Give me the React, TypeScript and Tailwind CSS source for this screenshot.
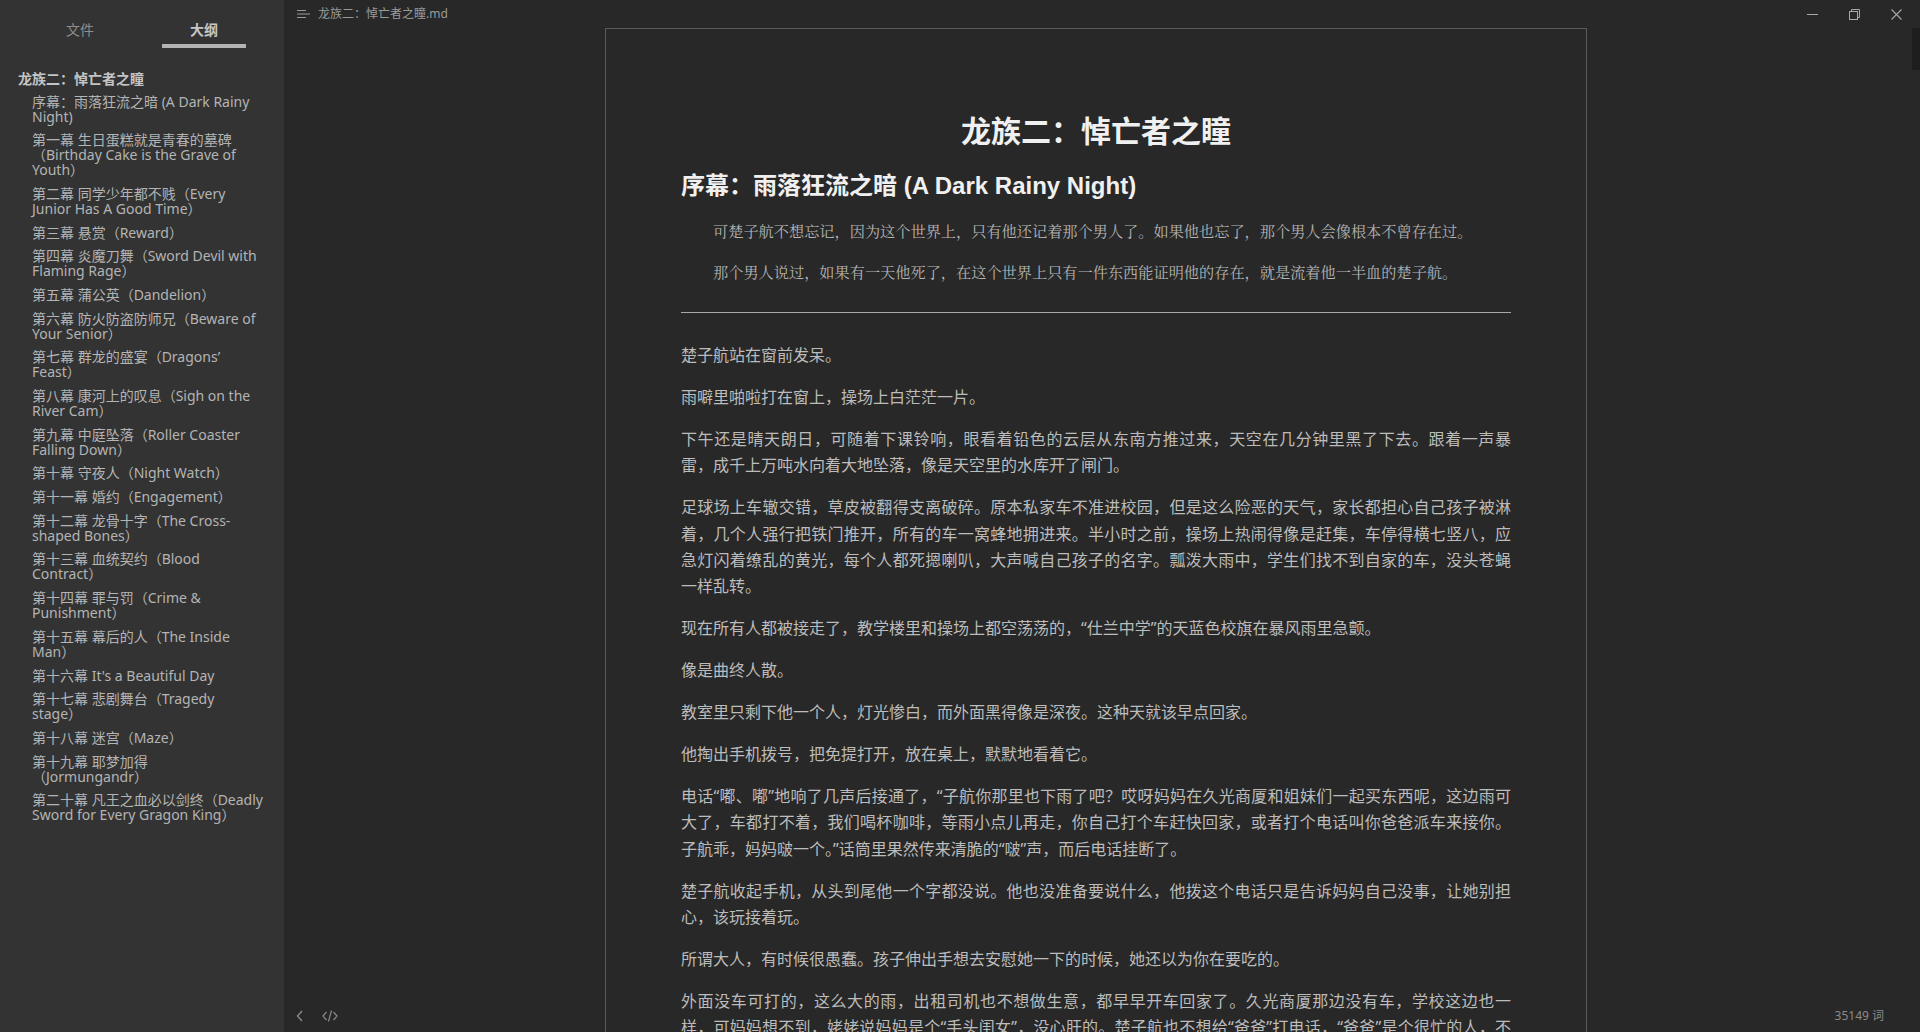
import React from 'react';

const OUTLINE = [
  '序幕：雨落狂流之暗 (A Dark Rainy Night)',
  '第一幕 生日蛋糕就是青春的墓碑（Birthday Cake is the Grave of Youth）',
  '第二幕 同学少年都不贱（Every Junior Has A Good Time）',
  '第三幕 悬赏（Reward）',
  '第四幕 炎魔刀舞（Sword Devil with Flaming Rage）',
  '第五幕 蒲公英（Dandelion）',
  '第六幕 防火防盗防师兄（Beware of Your Senior）',
  '第七幕 群龙的盛宴（Dragons’ Feast）',
  '第八幕 康河上的叹息（Sigh on the River Cam）',
  '第九幕 中庭坠落（Roller Coaster Falling Down）',
  '第十幕 守夜人（Night Watch）',
  '第十一幕 婚约（Engagement）',
  '第十二幕 龙骨十字（The Cross-shaped Bones）',
  '第十三幕 血统契约（Blood Contract）',
  '第十四幕 罪与罚（Crime & Punishment）',
  '第十五幕 幕后的人（The Inside Man）',
  '第十六幕 It\'s a Beautiful Day',
  '第十七幕 悲剧舞台（Tragedy stage）',
  '第十八幕 迷宫（Maze）',
  '第十九幕 耶梦加得（Jormungandr）',
  '第二十幕 凡王之血必以剑终（Deadly Sword for Every Gragon King）',
];

const QUOTE = [
  '可楚子航不想忘记，因为这个世界上，只有他还记着那个男人了。如果他也忘了，那个男人会像根本不曾存在过。',
  '那个男人说过，如果有一天他死了，在这个世界上只有一件东西能证明他的存在，就是流着他一半血的楚子航。',
];

const BODY = [
  '楚子航站在窗前发呆。',
  '雨噼里啪啦打在窗上，操场上白茫茫一片。',
  '下午还是晴天朗日，可随着下课铃响，眼看着铅色的云层从东南方推过来，天空在几分钟里黑了下去。跟着一声暴雷，成千上万吨水向着大地坠落，像是天空里的水库开了闸门。',
  '足球场上车辙交错，草皮被翻得支离破碎。原本私家车不准进校园，但是这么险恶的天气，家长都担心自己孩子被淋着，几个人强行把铁门推开，所有的车一窝蜂地拥进来。半小时之前，操场上热闹得像是赶集，车停得横七竖八，应急灯闪着缭乱的黄光，每个人都死摁喇叭，大声喊自己孩子的名字。瓢泼大雨中，学生们找不到自家的车，没头苍蝇一样乱转。',
  '现在所有人都被接走了，教学楼里和操场上都空荡荡的，“仕兰中学”的天蓝色校旗在暴风雨里急颤。',
  '像是曲终人散。',
  '教室里只剩下他一个人，灯光惨白，而外面黑得像是深夜。这种天就该早点回家。',
  '他掏出手机拨号，把免提打开，放在桌上，默默地看着它。',
  '电话“嘟、嘟”地响了几声后接通了，“子航你那里也下雨了吧？哎呀妈妈在久光商厦和姐妹们一起买东西呢，这边雨可大了，车都打不着，我们喝杯咖啡，等雨小点儿再走，你自己打个车赶快回家，或者打个电话叫你爸爸派车来接你。子航乖，妈妈啵一个。”话筒里果然传来清脆的“啵”声，而后电话挂断了。',
  '楚子航收起手机，从头到尾他一个字都没说。他也没准备要说什么，他拨这个电话只是告诉妈妈自己没事，让她别担心，该玩接着玩。',
  '所谓大人，有时候很愚蠢。孩子伸出手想去安慰她一下的时候，她还以为你在要吃的。',
  '外面没车可打的，这么大的雨，出租司机也不想做生意，都早早开车回家了。久光商厦那边没有车，学校这边也一样，可妈妈想不到，姥姥说妈妈是个“手头闺女”，没心肝的。楚子航也不想给“爸爸”打电话，“爸爸”是个很忙的人，不会为了这点小事来接他。',
];

const App: React.FC = () => {
  return (
    <div
      lang="zh-CN"
      className="flex h-[1032px] w-[1920px] overflow-hidden bg-[#282828] font-['Noto_Sans','Noto_Sans_CJK_SC',sans-serif]"
    >
      {/* Sidebar */}
      <aside className="flex w-[284px] shrink-0 flex-col bg-[#333333]">
        <div className="flex px-[18px] pt-[20px]">
          <div className="flex flex-1 flex-col items-center">
            <span className="h-5 text-[14px] leading-5 text-[#8e8e8e]">文件</span>
          </div>
          <div className="flex flex-1 flex-col items-center">
            <span className="h-5 text-[14px] font-bold leading-5 text-[#c6c6c6]">大纲</span>
            <div className="mt-[4px] h-[4px] w-[84px] bg-[#b4b4b4]" />
          </div>
        </div>

        <div className="mt-[23px] pl-[18px] text-[14px] font-bold leading-[15px] text-[#c4c4c4]">
          龙族二：悼亡者之瞳
        </div>
        <ul className="mt-[7.5px] flex flex-col gap-[8.7px] pl-[32px] pr-[20.6px] [text-spacing-trim:space-all]">
          {OUTLINE.map((item) => (
            <li key={item} className="text-[14px] leading-[15px] text-[#b4b4b4]">
              {item}
            </li>
          ))}
        </ul>
      </aside>

      {/* Main */}
      <main className="relative flex min-w-0 flex-1 flex-col">
        <header className="flex h-[28px] shrink-0 items-center">
          <svg className="ml-[13px] h-[10px] w-[14px]" viewBox="0 0 14 10" fill="none" stroke="#9a9a9a" strokeWidth="1">
            <path d="M0 1.5H9M0 5H13M0 8.5H9" />
          </svg>
          <span className="ml-[7px] text-[12px] text-[#9a9a9a]">龙族二：悼亡者之瞳.md</span>
          <div className="ml-auto mr-[3px] flex h-full">
            <div className="flex w-[42px] items-center justify-center">
              <svg width="11" height="11" viewBox="0 0 11 11" stroke="#a8a8a8" strokeWidth="1" fill="none">
                <path d="M0 5.5H11" />
              </svg>
            </div>
            <div className="flex w-[42px] items-center justify-center">
              <svg width="11" height="11" viewBox="0 0 11 11" stroke="#a8a8a8" strokeWidth="1" fill="none">
                <rect x="0.5" y="2.5" width="8" height="8" />
                <path d="M2.5 2.5V0.5H10.5V8.5H8.5" />
              </svg>
            </div>
            <div className="flex w-[42px] items-center justify-center">
              <svg width="11" height="11" viewBox="0 0 11 11" stroke="#a8a8a8" strokeWidth="1.1" fill="none">
                <path d="M0.5 0.5L10.5 10.5M10.5 0.5L0.5 10.5" />
              </svg>
            </div>
          </div>
        </header>

        <div className="relative flex flex-1 justify-center overflow-hidden pr-[12px]">
          <div className="absolute right-0 top-0 h-[42px] w-[8px] bg-[#1e1e1e]" />
          <article className="w-[982px] shrink-0 border-x border-t border-[#5a5a5a] px-[75px] pt-[83px]">
            <h1 className="text-center font-['Liberation_Sans','Noto_Sans_CJK_SC',sans-serif] text-[30px] font-bold leading-[40px] text-[#f0f0f0]">
              龙族二：悼亡者之瞳
            </h1>
            <h2 className="mt-[18px] font-['Liberation_Sans','Noto_Sans_CJK_SC',sans-serif] text-[24px] font-bold leading-[32px] text-[#f0f0f0]">
              序幕：雨落狂流之暗 (A Dark Rainy Night)
            </h2>
            <div className="mt-[18px] flex flex-col gap-[17px] pl-[32px]">
              {QUOTE.map((q) => (
                <p
                  key={q}
                  className="font-['Liberation_Serif','Noto_Serif_CJK_SC','Noto_Sans_CJK_SC',serif] text-[15.2px] leading-[24px] text-[#b4b4b4]"
                >
                  {q}
                </p>
              ))}
            </div>
            <hr className="mt-[27px] border-0 border-t border-[#a8a8a8]" />
            <div className="mt-[29px]">
              {BODY.map((p) => (
                <p key={p} className="mb-[15.7px] text-justify text-[16px] leading-[26.3px] text-[#bcbcbc]">
                  {p}
                </p>
              ))}
            </div>
          </article>
        </div>

        {/* Status bar */}
        <footer className="absolute bottom-0 left-0 right-0 flex h-[32px] items-center text-[#8a8a8a]">
          <svg className="ml-[12px]" width="8" height="12" viewBox="0 0 8 12" fill="none" stroke="#8a8a8a" strokeWidth="1.4">
            <path d="M6 1L1.5 6L6 11" />
          </svg>
          <svg className="ml-[18px]" width="16" height="12" viewBox="0 0 16 12" fill="none" stroke="#8a8a8a" strokeWidth="1.2">
            <path d="M4.5 2L1 6L4.5 10M11.5 2L15 6L11.5 10M9.5 0.5L6.5 11.5" />
          </svg>
          <span className="ml-auto mr-[36px] text-[12px]">35149 词</span>
        </footer>
      </main>
    </div>
  );
};

export default App;
